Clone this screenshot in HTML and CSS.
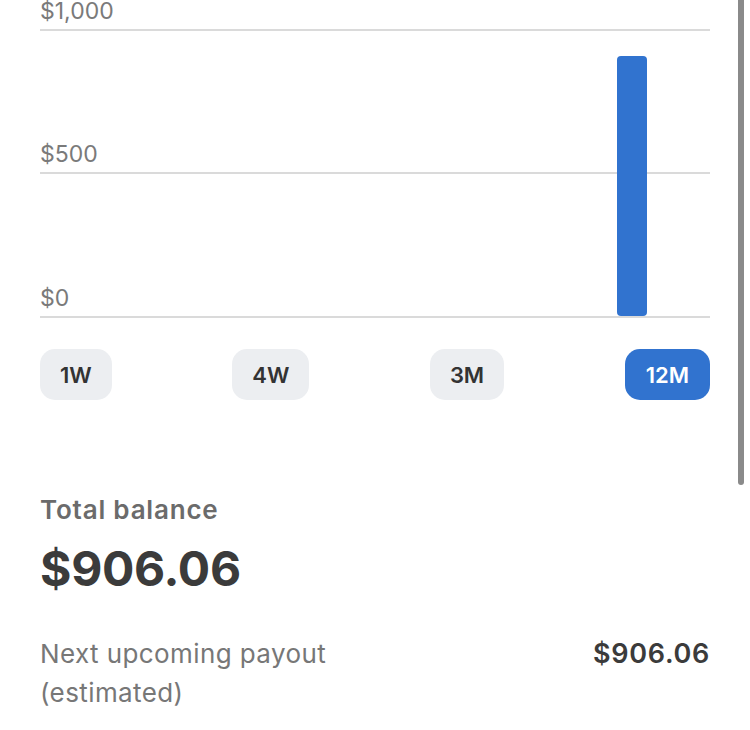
FILE: index.html
```html
<!DOCTYPE html>
<html lang="en">
<head>
  <meta charset="UTF-8" />
  <meta name="viewport" content="width=device-width, initial-scale=1" />
  <title>Balance</title>
  <link rel="stylesheet" href="styles.css">
</head>
<body>
  <div class="page">
    <div class="chart">
      <div class="grid-row"><span class="axis-label">$1,000</span></div>
      <div class="grid-row"><span class="axis-label">$500</span></div>
      <div class="grid-row"><span class="axis-label">$0</span></div>
      <div class="bars">
        <div class="bar" style="height: 260px"></div>
      </div>
    </div>

    <div class="ranges">
      <button class="range">1W</button>
      <button class="range">4W</button>
      <button class="range">3M</button>
      <button class="range active">12M</button>
    </div>

    <h2 class="balance-label">Total balance</h2>
    <div class="balance-amount">$906.06</div>

    <div class="payout">
      <span class="payout-label">Next upcoming payout<br>(estimated)</span>
      <span class="payout-amount">$906.06</span>
    </div>
  </div>
  <div class="scroll-indicator"></div>
</body>
</html>
```

FILE: styles.css
```css
html, body { margin: 0; height: 100%; overflow: hidden; background: #fff; }
body { font-family: Inter, "Noto Sans", sans-serif; color: #3d3d3d; position: relative; }
.page { padding: 0 40px; }

.chart { position: relative; margin-top: -113px; }
.grid-row { height: 143.5px; box-sizing: border-box; border-bottom: 2px solid #dadada; display: flex; align-items: flex-end; padding-bottom: 4px; }
.axis-label { font-size: 23px; line-height: 28px; color: #7a7a7a; }
.bars { position: absolute; top: 0; left: 0; right: 63px; bottom: 2px; display: flex; justify-content: flex-end; align-items: flex-end; }
.bar { width: 30px; background: #3173cf; border-radius: 4px; }

.ranges { display: flex; justify-content: space-between; margin-top: 31.5px; }
.range { height: 51px; padding: 0 20px; border: none; border-radius: 15px; background: #eceef1; color: #333; font-family: inherit; font-size: 22px; font-weight: 600; }
.range.active { padding: 0 21px; background: #3173cf; color: #fff; }

.balance-label { margin: 94px 0 0; font-size: 26px; line-height: 32px; font-weight: 600; letter-spacing: 0.8px; color: #6b6b6b; }
.balance-amount { margin-top: 14px; font-size: 48px; line-height: 58px; font-weight: 700; letter-spacing: -0.3px; color: #3b3b3b; }

.payout { display: flex; justify-content: space-between; align-items: baseline; margin-top: 36px; }
.payout-label { font-size: 26px; line-height: 39px; letter-spacing: 0.4px; color: #777; }
.payout-amount { font-size: 27px; font-weight: 600; letter-spacing: 0.7px; color: #3b3b3b; }

.scroll-indicator { position: absolute; top: -4px; right: 6px; width: 6px; height: 489px; border-radius: 3px; background: #8a8a8a; }
```
